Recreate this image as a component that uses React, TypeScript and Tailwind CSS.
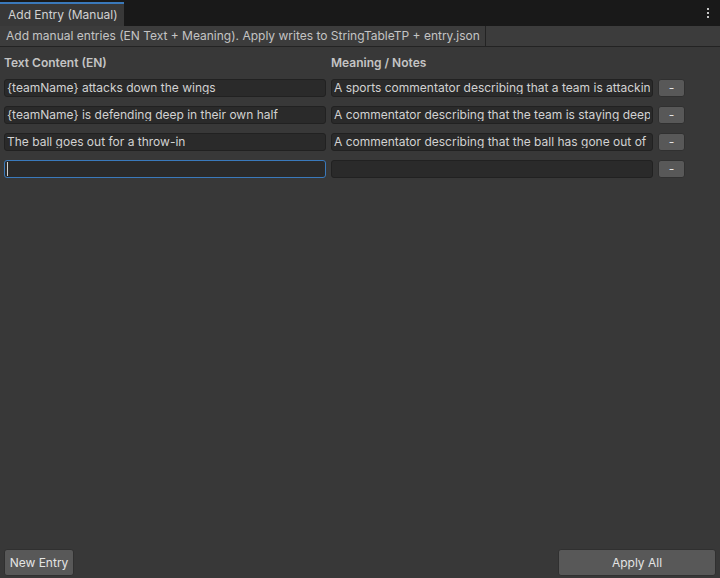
import { useState } from "react";

type Entry = { text: string; meaning: string };

const INITIAL: Entry[] = [
  {
    text: "{teamName} attacks down the wings",
    meaning: "A sports commentator describing that a team is attacking down the wings",
  },
  {
    text: "{teamName} is defending deep in their own half",
    meaning: "A commentator describing that the team is staying deep in their own half",
  },
  {
    text: "The ball goes out for a throw-in",
    meaning: "A commentator describing that the ball has gone out of play for a throw-in",
  },
  { text: "", meaning: "" },
];

// Unity IMGUI look: dark fields, grey buttons, small rounded corners.
const Field = ({
  value,
  focused,
}: {
  value: string;
  focused?: boolean;
}) => (
  <div
    className={`flex h-[18px] w-[322px] shrink-0 items-center overflow-hidden rounded-[3px] border bg-[#2a2a2a] px-[2px] ${
      focused ? "border-[#3a79bb]" : "border-[#212121]"
    }`}
  >
    {focused && <span className="h-[14px] w-[1px] shrink-0 bg-[#d2d2d2]" />}
    <span className="min-w-0 overflow-hidden whitespace-nowrap text-[12px] leading-none text-[#d2d2d2]">
      {value}
    </span>
  </div>
);

const Button = ({
  children,
  className,
}: {
  children: string;
  className: string;
}) => (
  <button
    type="button"
    className={`flex shrink-0 items-center justify-center rounded-[3px] border border-[#303030] bg-[#585858] text-[12px] text-[#e4e4e4] ${className}`}
  >
    {children}
  </button>
);

const App = () => {
  const [entries] = useState(INITIAL);

  return (
    <div className="flex h-[578px] w-[720px] flex-col bg-[#383838] [font-family:Inter,'Noto_Sans',sans-serif]">
      <div className="flex h-[26px] shrink-0 items-end justify-between bg-[#191919]">
        <div className="flex h-[24px] w-[124px] items-center border-t-2 border-[#3a79bb] bg-[#383838] pl-[8px] text-[12px] text-[#d2d2d2]">
          Add Entry (Manual)
        </div>
        <div className="mr-[11px] flex h-[24px] flex-col items-center justify-center gap-[2px] self-center">
          <span className="h-[2px] w-[2px] bg-[#c4c4c4]" />
          <span className="h-[2px] w-[2px] bg-[#c4c4c4]" />
          <span className="h-[2px] w-[2px] bg-[#c4c4c4]" />
        </div>
      </div>

      <div className="flex h-[21px] shrink-0 border-b border-[#232323] bg-[#3c3c3c]">
        <div className="flex w-[486px] items-center whitespace-nowrap border-r border-[#232323] pl-[6px] text-[12px] text-[#c4c4c4]">
          Add manual entries (EN Text + Meaning). Apply writes to StringTableTP + entry.json
        </div>
      </div>

      <div className="mt-[8px] flex h-[15px] items-center text-[12px] font-semibold text-[#c4c4c4]">
        <span className="ml-[4px] w-[327px]">Text Content (EN)</span>
        <span>Meaning / Notes</span>
      </div>

      <div className="mt-[9px] flex flex-col gap-[9px] pl-[4px]">
        {entries.map((entry, i) => (
          <div key={i} className="flex items-center gap-[5px]">
            <Field value={entry.text} focused={i === entries.length - 1} />
            <Field value={entry.meaning} />
            <Button className="h-[18px] w-[27px]">-</Button>
          </div>
        ))}
      </div>

      <div className="mt-auto mb-[2px] flex items-center justify-between px-[4px]">
        <Button className="h-[27px] w-[70px]">New Entry</Button>
        <Button className="h-[27px] w-[158px]">Apply All</Button>
      </div>
    </div>
  );
};

export default App;
